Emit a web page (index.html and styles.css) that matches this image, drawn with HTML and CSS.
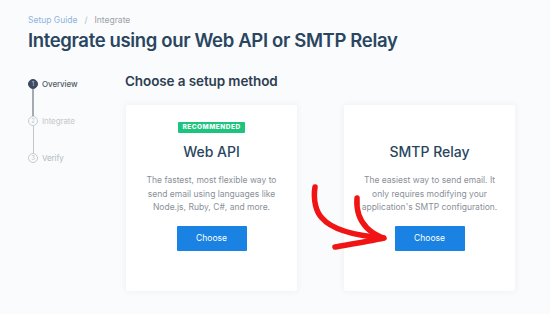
FILE: index.html
```html
<!DOCTYPE html>
<html>
<head>
<meta charset="utf-8">
<link rel="stylesheet" href="styles.css">
</head>
<body>
<div class="page">
  <div class="crumbs"><span class="crumb-link">Setup Guide</span><span class="sep">/</span><span class="crumb-cur">Integrate</span></div>
  <h1 class="title">Integrate using our Web API or SMTP Relay</h1>
  <div class="layout">
    <ol class="steps">
      <li class="step active"><span class="dot">1</span><span class="label">Overview</span></li>
      <li class="step done-line"><span class="dot">2</span><span class="label">Integrate</span></li>
      <li class="step last"><span class="dot">3</span><span class="label">Verify</span></li>
    </ol>
    <div class="main">
      <h2 class="subtitle">Choose a setup method</h2>
      <div class="cards">
        <div class="card">
          <div class="badge-slot"><span class="badge">RECOMMENDED</span></div>
          <h3 class="card-title">Web API</h3>
          <p class="card-desc">The fastest, most flexible way to send email using languages like Node.js, Ruby, C#, and more.</p>
          <button class="btn">Choose</button>
        </div>
        <div class="card">
          <div class="badge-slot"></div>
          <h3 class="card-title">SMTP Relay</h3>
          <p class="card-desc">The easiest way to send email. It only requires modifying your application's SMTP configuration.</p>
          <button class="btn">Choose</button>
        </div>
      </div>
    </div>
  </div>
  <svg class="arrow" width="550" height="314" viewBox="0 0 550 314">
    <g fill="none" stroke="#f01414" stroke-width="5.5" stroke-linecap="round" stroke-linejoin="round">
      <path d="M315 187 C313 200 316 212 322 218 C333 231 360 236 383 238"/>
      <path d="M357 198 C356 212 361 222 367 228 C372 233 378 236 383 238"/>
      <path d="M335 247 C352 244 370 241 384 238"/>
    </g>
  </svg>
</div>
</body>
</html>
```
FILE: styles.css
```css
* { box-sizing: border-box; }
html, body { margin: 0; padding: 0; }
body {
  background: #fafbfc;
  font-family: "Inter", "Liberation Sans", sans-serif;
  width: 550px;
  height: 314px;
  overflow: hidden;
}
.page {
  position: relative;
  padding: 14px 0 0 28px;
  height: 314px;
}
.crumbs {
  font-size: 8.5px;
  line-height: 12px;
  color: #9aa1a9;
}
.crumb-link { color: #8fb3df; }
.sep { margin: 0 7px; color: #b5bac0; }
.title {
  margin: 1px 0 0;
  font-size: 18.5px;
  line-height: 26px;
  font-weight: 600;
  color: #294661;
  letter-spacing: -0.35px;
}
.layout {
  display: flex;
  margin-top: 19px;
}
.steps {
  list-style: none;
  margin: 0;
  padding: 7px 0 0 0;
  width: 97px;
  flex: none;
}
.step {
  position: relative;
  display: flex;
  height: 37px;
  align-items: flex-start;
}
.step .dot {
  width: 10px;
  height: 10px;
  border-radius: 50%;
  border: 1px solid #c7cbcf;
  color: #c2c6ca;
  font-size: 6px;
  line-height: 8px;
  text-align: center;
  flex: none;
  background: #fafbfc;
  position: relative;
  z-index: 1;
}
.step .label {
  margin-left: 4px;
  font-size: 8px;
  line-height: 10px;
  color: #c4c8cc;
  letter-spacing: -0.1px;
}
.step.active .dot {
  background: #3c4a63;
  border-color: #3c4a63;
  color: #c9d0dc;
}
.step.active .label { color: #525c6a; font-weight: 500; }
.step.last .label { color: #b3b8bd; }
.step::after {
  content: "";
  position: absolute;
  left: 4.5px;
  top: 10px;
  height: 27px;
  width: 1px;
  background: #c2c6ca;
}
.step.active::after { width: 2px; left: 4px; background: #a6abb1; }
.step.last::after { display: none; }
.main { flex: none; width: 390px; }
.subtitle {
  margin: 0;
  font-size: 13.5px;
  line-height: 18px;
  font-weight: 600;
  color: #2e3e52;
  letter-spacing: -0.1px;
}
.cards {
  display: flex;
  gap: 47px;
  margin-top: 15px;
  margin-left: 1px;
}
.card {
  width: 171px;
  height: 186px;
  background: #fff;
  box-shadow: 0 0 6px rgba(40, 60, 90, 0.07);
  border-radius: 2px;
  display: flex;
  flex-direction: column;
  align-items: center;
  padding-top: 17px;
}
.badge-slot { height: 11px; display: flex; justify-content: center; }
.badge {
  background: #1ec47d;
  color: #fff;
  font-size: 6.5px;
  font-weight: 800;
  letter-spacing: 0.5px;
  line-height: 11px;
  padding: 0 4px;
  border-radius: 1px;
}
.card-title {
  margin: 10px 0 0;
  font-size: 14px;
  line-height: 18px;
  font-weight: 500;
  color: #294661;
}
.card-desc {
  margin: 13px 0 0;
  padding: 0 14px;
  font-size: 8.5px;
  line-height: 13.5px;
  color: #8a9099;
  text-align: center;
}
.btn {
  margin-top: 11px;
  width: 70px;
  height: 25px;
  border: none;
  border-radius: 1px;
  background: #1a82e2;
  color: #fff;
  font-family: inherit;
  font-size: 8.5px;
  padding: 0;
}
.arrow {
  position: absolute;
  left: 0;
  top: 0;
  pointer-events: none;
}
```
